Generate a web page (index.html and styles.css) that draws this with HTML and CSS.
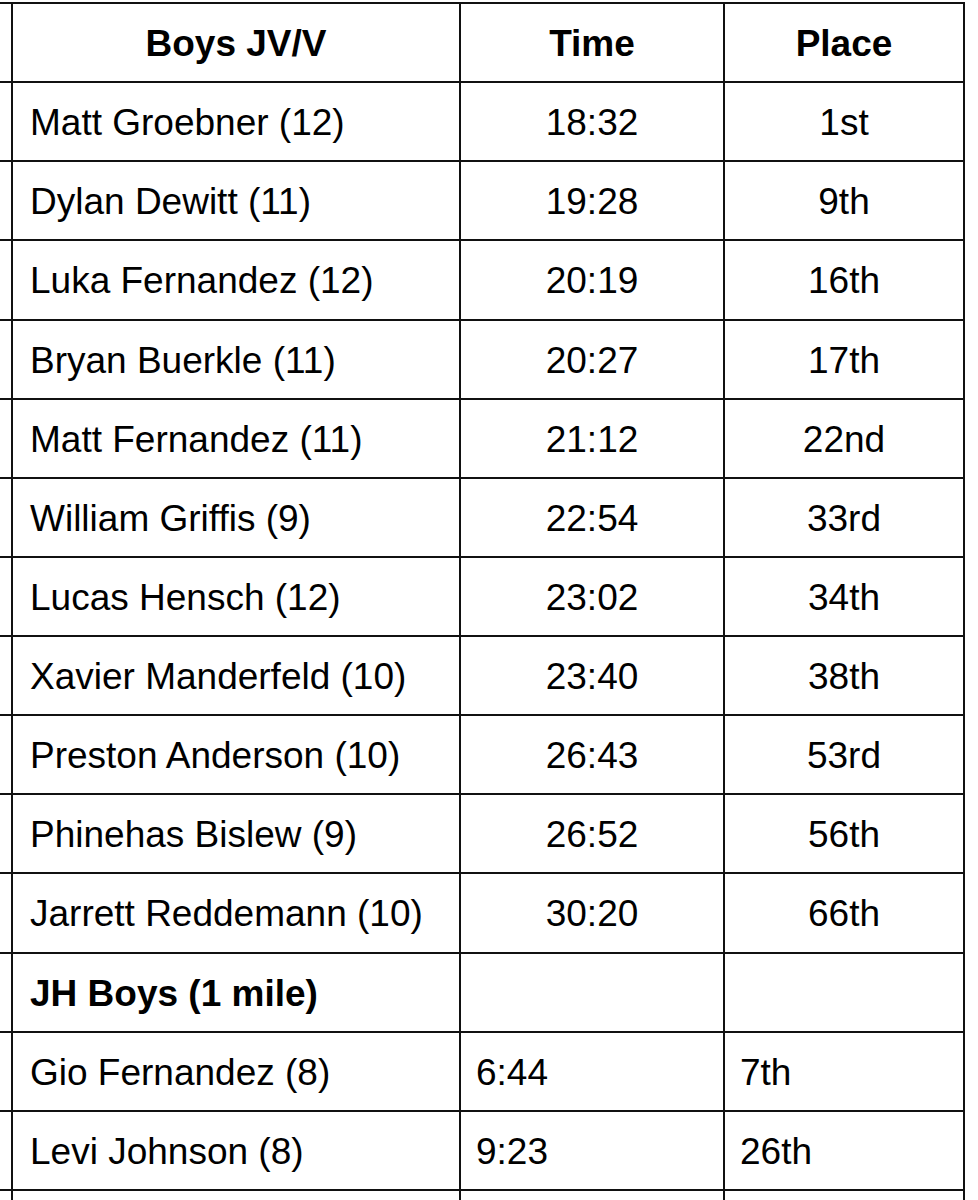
FILE: index.html
```html
<!DOCTYPE html>
<html lang="en">
<head>
<meta charset="utf-8">
<title>Boys JV/V Results</title>
<link rel="stylesheet" href="styles.css">
</head>
<body>
<div class="results">
  <div class="cell edge"></div><div class="cell head">Boys JV/V</div><div class="cell head">Time</div><div class="cell head">Place</div>

  <div class="cell edge"></div><div class="cell name">Matt Groebner (12)</div><div class="cell mid">18:32</div><div class="cell mid">1st</div>
  <div class="cell edge"></div><div class="cell name">Dylan Dewitt (11)</div><div class="cell mid">19:28</div><div class="cell mid">9th</div>
  <div class="cell edge"></div><div class="cell name">Luka Fernandez (12)</div><div class="cell mid">20:19</div><div class="cell mid">16th</div>
  <div class="cell edge"></div><div class="cell name">Bryan Buerkle (11)</div><div class="cell mid">20:27</div><div class="cell mid">17th</div>
  <div class="cell edge"></div><div class="cell name">Matt Fernandez (11)</div><div class="cell mid">21:12</div><div class="cell mid">22nd</div>
  <div class="cell edge"></div><div class="cell name">William Griffis (9)</div><div class="cell mid">22:54</div><div class="cell mid">33rd</div>
  <div class="cell edge"></div><div class="cell name">Lucas Hensch (12)</div><div class="cell mid">23:02</div><div class="cell mid">34th</div>
  <div class="cell edge"></div><div class="cell name">Xavier Manderfeld (10)</div><div class="cell mid">23:40</div><div class="cell mid">38th</div>
  <div class="cell edge"></div><div class="cell name">Preston Anderson (10)</div><div class="cell mid">26:43</div><div class="cell mid">53rd</div>
  <div class="cell edge"></div><div class="cell name">Phinehas Bislew (9)</div><div class="cell mid">26:52</div><div class="cell mid">56th</div>
  <div class="cell edge"></div><div class="cell name">Jarrett Reddemann (10)</div><div class="cell mid">30:20</div><div class="cell mid">66th</div>

  <div class="cell edge"></div><div class="cell name bold">JH Boys (1 mile)</div><div class="cell left"></div><div class="cell left"></div>
  <div class="cell edge"></div><div class="cell name">Gio Fernandez (8)</div><div class="cell left">6:44</div><div class="cell left">7th</div>
  <div class="cell edge"></div><div class="cell name">Levi Johnson (8)</div><div class="cell left">9:23</div><div class="cell left">26th</div>
  <div class="cell edge"></div><div class="cell name"></div><div class="cell left"></div><div class="cell left"></div>
</div>
</body>
</html>
```

FILE: styles.css
```css
html, body {
  margin: 0;
  padding: 0;
  background: #ffffff;
}

body {
  font-family: "Liberation Sans", Arial, sans-serif;
  color: #000000;
}

.results {
  display: grid;
  grid-template-columns: 11px 446px 262px 238px;
  grid-auto-rows: 77.13px;
  gap: 2px;
  width: max-content;
  margin-top: 2px;
  padding: 2px 2px 0 0;
  background: #111111;
}

.cell {
  background: #ffffff;
  display: flex;
  align-items: center;
  padding-top: 2px;
  font-size: 37px;
  line-height: 1;
  white-space: nowrap;
}

.head {
  justify-content: center;
  font-weight: bold;
}

.name {
  padding-left: 17px;
}

.bold {
  font-weight: bold;
}

.mid {
  justify-content: center;
}

.left {
  padding-left: 15px;
}
```
